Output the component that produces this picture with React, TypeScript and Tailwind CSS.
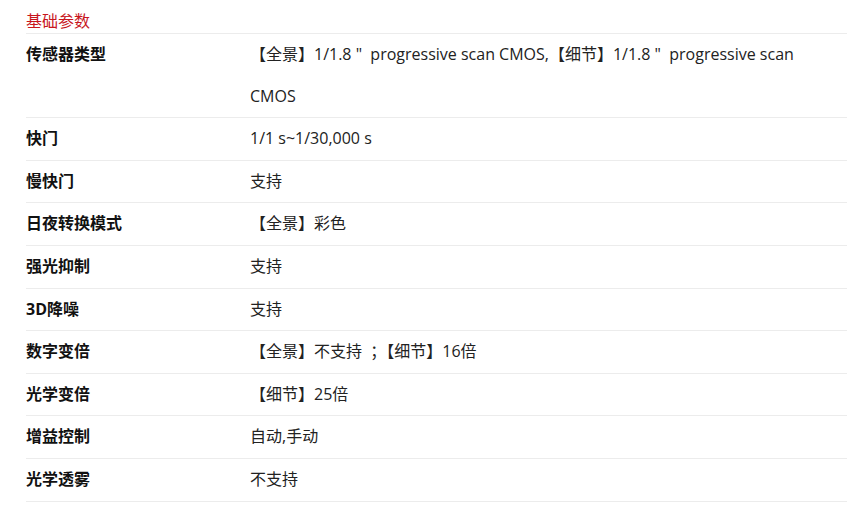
const rows: { label: string; value: string[] }[] = [
  {
    label: "传感器类型",
    value: ["【全景】1/1.8 \"  progressive scan CMOS,【细节】1/1.8 \"  progressive scan", "CMOS"],
  },
  { label: "快门", value: ["1/1 s~1/30,000 s"] },
  { label: "慢快门", value: ["支持"] },
  { label: "日夜转换模式", value: ["【全景】彩色"] },
  { label: "强光抑制", value: ["支持"] },
  { label: "3D降噪", value: ["支持"] },
  { label: "数字变倍", value: ["【全景】不支持  ；【细节】16倍"] },
  { label: "光学变倍", value: ["【细节】25倍"] },
  { label: "增益控制", value: ["自动,手动"] },
  { label: "光学透雾", value: ["不支持"] },
];

export default function App() {
  return (
    <div className="min-h-screen bg-white pl-[26px] font-['Open_Sans','Noto_Sans_CJK_SC',sans-serif]">
      {/* 标题 */}
      <h2 className="h-[34px] pt-[9px] text-[16px] leading-[24px] text-[#c8161d] border-b border-[#ececec]">
        基础参数
      </h2>

      {/* 参数表 */}
      <div>
        {rows.map((row) => (
          <div key={row.label} className="flex border-b border-[#ececec] leading-[41.6px]">
            <div className="w-[224px] shrink-0 text-[16px] font-bold text-[#111]">{row.label}</div>
            <div className="text-[16px] text-[#222] whitespace-pre">
              {row.value.map((line) => (
                <div key={line}>{line}</div>
              ))}
            </div>
          </div>
        ))}
      </div>
    </div>
  );
}
